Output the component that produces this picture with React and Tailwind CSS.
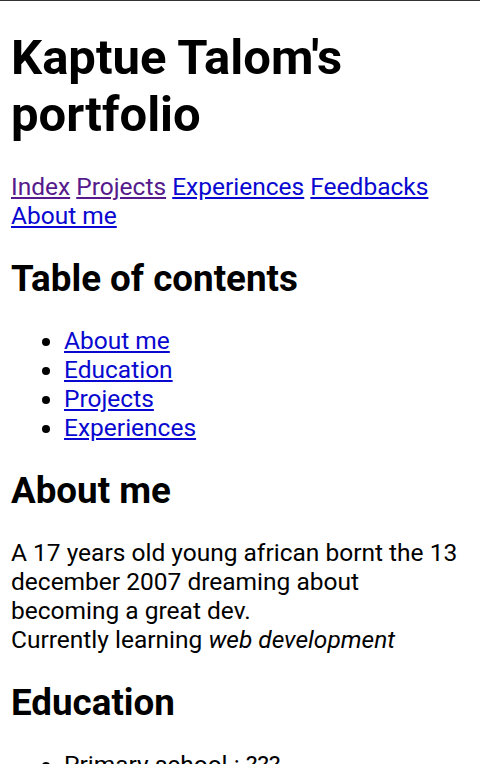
const NAV = ["Index", "Projects", "Experiences", "Feedbacks", "About me"];
const VISITED = ["Index", "Projects"];
const TOC = ["About me", "Education", "Projects", "Experiences"];

export default function App() {
  return (
    <div className="min-h-screen bg-white border-t border-[#333] font-['Roboto',sans-serif] text-[24.5px] leading-[29px] text-black px-[11px] overflow-hidden">
      <h1 className="mt-[28px] mb-[29px] text-[49px] leading-[57px] font-bold">Kaptue Talom's portfolio</h1>

      <nav>
        {NAV.map((n, i) => (
          <span key={n}>
            <a href="#" className={"underline " + (VISITED.includes(n) ? "text-[#551a8b]" : "text-[#0808d0]")}>{n}</a>
            {i < NAV.length - 1 ? " " : ""}
          </span>
        ))}
      </nav>

      <h2 className="mt-[28px] mb-[26px] text-[36.75px] leading-[42px] font-bold">Table of contents</h2>
      <ul className="list-disc pl-[53px]">
        {TOC.map((t) => (
          <li key={t}><a href="#" className="underline text-[#0808d0]">{t}</a></li>
        ))}
      </ul>

      <h2 className="mt-[28px] mb-[26px] text-[36.75px] leading-[42px] font-bold">About me</h2>
      <p>
        A 17 years old young african bornt the 13 december 2007 dreaming about becoming a great dev.
        <br />
        Currently learning <em>web development</em>
      </p>

      <h2 className="mt-[28px] mb-[26px] text-[36.75px] leading-[42px] font-bold">Education</h2>
      <ul className="list-disc pl-[53px]">
        <li>Primary school : ???</li>
        <li>Secondary school : ???</li>
      </ul>
    </div>
  );
}
